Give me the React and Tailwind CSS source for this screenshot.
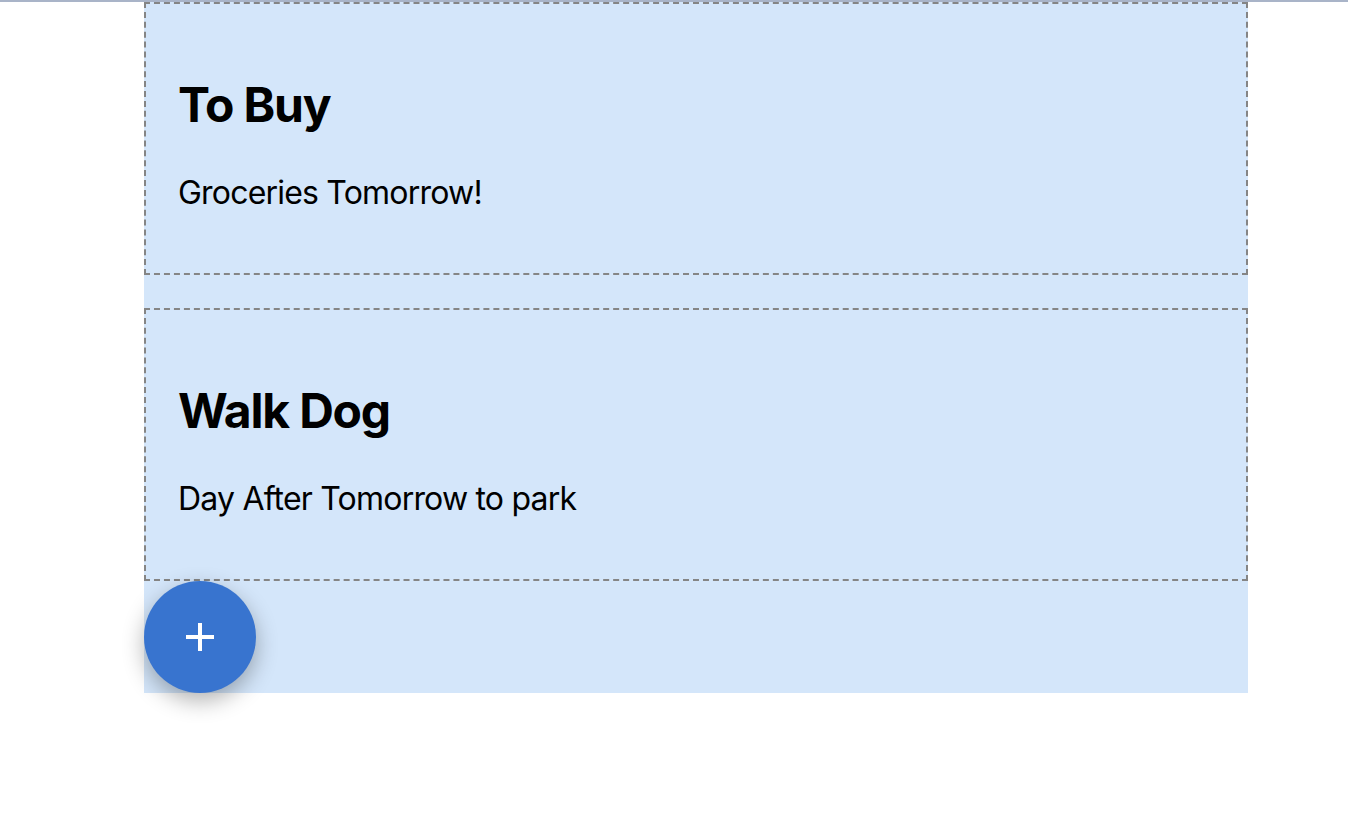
import React from "react";

const todos = [
  { title: "To Buy", text: "Groceries Tomorrow!" },
  { title: "Walk Dog", text: "Day After Tomorrow to park" },
];

function TodoCard({ title, text }) {
  return (
    <div className="border-2 border-dashed border-[#858585] h-[273px] px-[32px] pt-[72px]">
      <h2 className="text-[48px] leading-[58px] font-bold tracking-[-0.025em]">{title}</h2>
      <p className="text-[32px] leading-[39px] mt-[39px] tracking-[-0.025em]">{text}</p>
    </div>
  );
}

export default function App() {
  return (
    <div className="min-h-screen bg-white text-black font-['Inter','Liberation_Sans',sans-serif]">
      <div className="h-[2px] w-full bg-[#a9b4c8]" />
      <div className="ml-[144px] w-[1104px] bg-[#d4e6fa] flex flex-col">
        {todos.map((t, i) => (
          <div key={t.title} className={i > 0 ? "mt-[33px]" : ""}>
            <TodoCard {...t} />
          </div>
        ))}
        {/* add button */}
        <button className="w-[112px] h-[112px] rounded-full bg-[#3874cf] flex items-center justify-center shadow-[0_8px_22px_rgba(0,0,0,0.3)]">
          <svg width="28" height="28" viewBox="0 0 28 28">
            <path d="M14 0v28M0 14h28" stroke="#fff" strokeWidth="4" />
          </svg>
        </button>
      </div>
    </div>
  );
}
